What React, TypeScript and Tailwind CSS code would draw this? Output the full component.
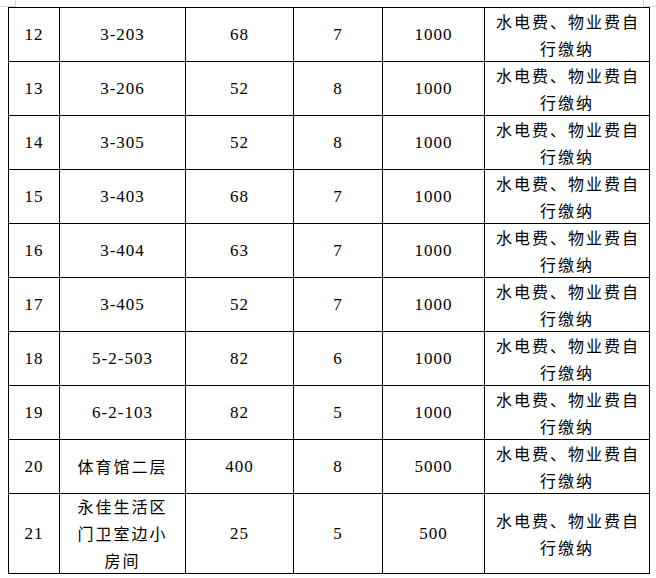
const rows = [
  { no: '12', room: ['3-203'], area: '68', floor: '7', rent: '1000' },
  { no: '13', room: ['3-206'], area: '52', floor: '8', rent: '1000' },
  { no: '14', room: ['3-305'], area: '52', floor: '8', rent: '1000' },
  { no: '15', room: ['3-403'], area: '68', floor: '7', rent: '1000' },
  { no: '16', room: ['3-404'], area: '63', floor: '7', rent: '1000' },
  { no: '17', room: ['3-405'], area: '52', floor: '7', rent: '1000' },
  { no: '18', room: ['5-2-503'], area: '82', floor: '6', rent: '1000' },
  { no: '19', room: ['6-2-103'], area: '82', floor: '5', rent: '1000' },
  { no: '20', room: ['体育馆二层'], area: '400', floor: '8', rent: '5000' },
  { no: '21', room: ['永佳生活区', '门卫室边小', '房间'], area: '25', floor: '5', rent: '500', tall: true },
]

const num = "font-['Liberation_Serif',serif] text-[17px] tracking-[1px]"
const cjk = "font-['Noto_Sans_CJK_SC','Noto_Sans',sans-serif] text-[16px] tracking-[2px] leading-[27px]"
const cell = 'flex flex-col items-center justify-center border-r border-b border-black text-black text-center'

function isCjk(s: string) {
  return /[\u4e00-\u9fff]/.test(s)
}

export default function App() {
  return (
    <div className="relative w-[656px] h-[578px] bg-white">
      {/* page corner marks */}
      <div className="absolute left-0 top-[6px] w-[15px] h-px bg-gray-300" />
      <div className="absolute left-[15px] top-0 w-px h-[7px] bg-gray-300" />
      <div className="absolute left-[643px] top-0 w-px h-[6px] bg-gray-300" />
      <div className="absolute left-[643px] top-[6px] w-[13px] h-px bg-gray-300" />

      <div className="pl-2 pt-[7px]">
        <div className="grid w-[642px] grid-cols-[51px_126px_108px_89px_102px_165px] border-l border-t border-black">
          {rows.map((r) => {
            const h = r.tall ? 'h-[80px]' : 'h-[54px]'
            return [
              <div key={r.no + 'a'} className={`${cell} ${h} ${num}`}>{r.no}</div>,
              <div key={r.no + 'b'} className={`${cell} ${h} ${isCjk(r.room[0]) ? cjk : num}`}>
                {r.room.map((line) => (
                  <span key={line}>{line}</span>
                ))}
              </div>,
              <div key={r.no + 'c'} className={`${cell} ${h} ${num}`}>{r.area}</div>,
              <div key={r.no + 'd'} className={`${cell} ${h} ${num}`}>{r.floor}</div>,
              <div key={r.no + 'e'} className={`${cell} ${h} ${num}`}>{r.rent}</div>,
              <div key={r.no + 'f'} className={`${cell} ${h} ${cjk}`}>
                <span className="pl-[2px]">水电费、物业费自</span>
                <span>行缴纳</span>
              </div>,
            ]
          })}
        </div>
      </div>
    </div>
  )
}
